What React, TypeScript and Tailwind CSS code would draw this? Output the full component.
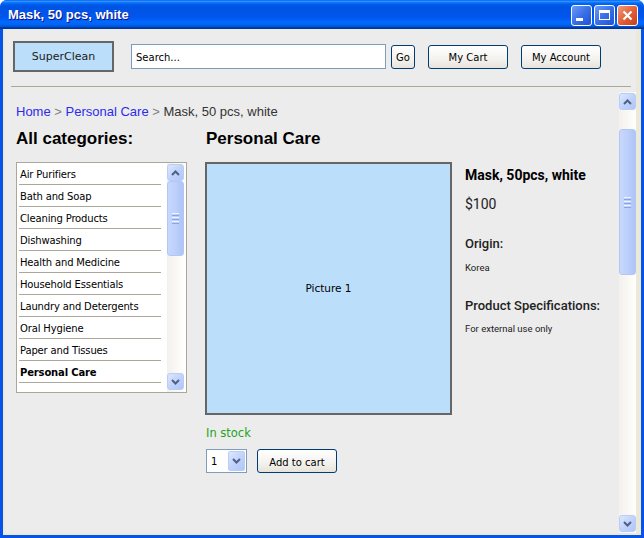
import React from "react";

const tah = "font-['DejaVu_Sans',sans-serif]";
const arial = "font-['Liberation_Sans',Arial,sans-serif]";
const roboto = "font-['Roboto',sans-serif]";

function Chevron({ dir }: { dir: "up" | "down" }) {
  return (
    <svg width="9" height="6" viewBox="0 0 9 6">
      <path
        d={dir === "up" ? "M1 5 L4.5 1.5 L8 5" : "M1 1 L4.5 4.5 L8 1"}
        stroke="#4d6185"
        strokeWidth="2"
        fill="none"
      />
    </svg>
  );
}

function SBtn({ dir }: { dir: "up" | "down" }) {
  return (
    <div className="w-[17px] h-[17px] shrink-0 rounded-[3px] border border-[#b9cdf8] bg-[linear-gradient(135deg,#dde8fe,#c1d3fb_50%,#b0c6f7)] flex items-center justify-center">
      <Chevron dir={dir} />
    </div>
  );
}

function Thumb({ h }: { h: number }) {
  return (
    <div
      className="w-[17px] shrink-0 rounded-[3px] border border-[#b2c7f6] bg-[linear-gradient(90deg,#c9d8fc,#bcd0fb_50%,#aec4f6)] flex flex-col items-center justify-center gap-[1px]"
      style={{ height: h }}
    >
      <div className="w-[7px] h-px bg-[#eef3ff]" />
      <div className="w-[7px] h-px bg-[#8ca5e0]" />
      <div className="w-[7px] h-px bg-[#eef3ff]" />
      <div className="w-[7px] h-px bg-[#8ca5e0]" />
      <div className="w-[7px] h-px bg-[#eef3ff]" />
      <div className="w-[7px] h-px bg-[#8ca5e0]" />
    </div>
  );
}

const xpBtn =
  "h-[24px] pt-[2px] border border-[#003c74] rounded-[3px] bg-[linear-gradient(180deg,#ffffff,#f3f2ee_60%,#e6e3da)] flex items-center justify-center text-[10px] text-black " +
  tah;

const cats = [
  "Air Purifiers",
  "Bath and Soap",
  "Cleaning Products",
  "Dishwashing",
  "Health and Medicine",
  "Household Essentials",
  "Laundry and Detergents",
  "Oral Hygiene",
  "Paper and Tissues",
  "Personal Care",
];

export default function App() {
  return (
    <div className="w-[644px] h-[538px] bg-white">
      <div className="w-full h-full flex flex-col rounded-t-[7px] overflow-hidden bg-[#0553e9]">
        {/* Title bar */}
        <div className="h-[29px] shrink-0 flex items-center pl-[8px] pr-[6px] bg-[linear-gradient(180deg,#0058ee_0%,#3593ff_4%,#288eff_6%,#127dff_8%,#036ffc_10%,#0262ee_14%,#0057e5_20%,#0054e3_24%,#0055eb_56%,#005bf5_66%,#026afe_76%,#0062ef_86%,#0052d6_92%,#0040ab_94%,#003092_100%)]">
          <span
            className={
              "text-white font-bold text-[13px] leading-none [text-shadow:1px_1px_#0f1089] " +
              arial
            }
          >
            Mask, 50 pcs, white
          </span>
          <div className="ml-auto flex gap-[2px] mt-[1px]">
            <div className="w-[21px] h-[21px] rounded-[3px] border border-white bg-[linear-gradient(135deg,#6b9cf7,#3a6fe8_50%,#1f52d6)] flex items-end pl-[4px] pb-[4px]">
              <div className="w-[7px] h-[3px] bg-white" />
            </div>
            <div className="w-[21px] h-[21px] rounded-[3px] border border-white bg-[linear-gradient(135deg,#6b9cf7,#3a6fe8_50%,#1f52d6)] flex items-center justify-center">
              <div className="w-[11px] h-[10px] border border-white border-t-[3px]" />
            </div>
            <div className="w-[21px] h-[21px] rounded-[3px] border border-white bg-[linear-gradient(135deg,#f19a7c,#e2603a_50%,#c8401b)] flex items-center justify-center">
              <svg width="11" height="11" viewBox="0 0 11 11">
                <path d="M1.5 1.5 L9.5 9.5 M9.5 1.5 L1.5 9.5" stroke="white" strokeWidth="2.2" />
              </svg>
            </div>
          </div>
        </div>

        {/* Frame */}
        <div className="flex-1 min-h-0 flex pl-[3px] pr-[3px] pb-[3px]">
          <div className="flex-1 flex bg-[#ece9d8] pl-[2px] pr-[5px] pb-[2px]">
            <div className="flex-1 flex flex-col bg-[#ececec]">
              {/* Header */}
              <div className="flex items-center pl-[8px] pt-[12px]">
                <div
                  className={
                    "w-[101px] h-[31px] pt-[2px] border-2 border-[#666666] bg-[#bbdefb] flex items-center justify-center text-[11px] text-[#222] " +
                    tah
                  }
                >
                  SuperClean
                </div>
                <div
                  className={
                    "ml-[17px] w-[255px] h-[25px] pt-[2px] border border-[#7f9db9] bg-white flex items-center pl-[4px] text-[10px] text-black " +
                    tah
                  }
                >
                  Search...
                </div>
                <div className={"ml-[5px] w-[24px] " + xpBtn}>Go</div>
                <div className={"ml-[13px] w-[80px] " + xpBtn}>My Cart</div>
                <div className={"ml-[13px] w-[80px] " + xpBtn}>My Account</div>
              </div>
              <div className="mt-[14px] ml-[6px] mr-[5px] h-px bg-[#aca899]" />

              {/* Scroll region */}
              <div className="mt-[5px] flex-1 min-h-0 flex">
                <div className="flex-1 pl-[11px] pt-[12px]">
                  <div className={"text-[13px] leading-[16px] " + arial}>
                    <span className="text-[#2b2bef]">Home</span>
                    <span className="text-[#808080]"> &gt; </span>
                    <span className="text-[#2b2bef]">Personal Care</span>
                    <span className="text-[#808080]"> &gt; </span>
                    <span className="text-[#333]">Mask, 50 pcs, white</span>
                  </div>

                  <div className="flex mt-[9px]">
                    {/* Left column */}
                    <div className="w-[171px] shrink-0">
                      <div className={"text-[17px] font-bold leading-[20px] text-black " + arial}>
                        All categories:
                      </div>
                      <div className="mt-[13px] h-[231px] border border-[#aca899] bg-white flex">
                        <div className="flex-1 ml-[2px] mr-[6px]">
                          {cats.map((c) => (
                            <div
                              key={c}
                              className={
                                "h-[22px] pt-[1px] border-b border-[#aca899] flex items-center pl-[1px] text-[10px] tracking-[-0.15px] text-black " +
                                tah +
                                (c === "Personal Care" ? " font-bold" : "")
                              }
                            >
                              {c}
                            </div>
                          ))}
                        </div>
                        <div className="w-[17px] mr-[2px] pt-[1px] pb-[2px] flex flex-col bg-[linear-gradient(90deg,#f3f1ec,#fefefb)]">
                          <SBtn dir="up" />
                          <Thumb h={75} />
                          <div className="flex-1" />
                          <SBtn dir="down" />
                        </div>
                      </div>
                    </div>

                    {/* Right area */}
                    <div className="ml-[18px] flex-1">
                      <div className={"pl-[1px] text-[17px] font-bold leading-[20px] text-black " + arial}>
                        Personal Care
                      </div>
                      <div className="flex mt-[13px]">
                        <div className="w-[247px] shrink-0">
                          <div
                            className={
                              "h-[253px] border-2 border-[#666666] bg-[#bbdefb] flex items-center justify-center text-[10.5px] text-black " +
                              tah
                            }
                          >
                            Picture 1
                          </div>
                          <div
                            className={
                              "mt-[11px] pl-[1px] text-[11.5px] leading-[14px] text-[#22a322] " + tah
                            }
                          >
                            In stock
                          </div>
                          <div className="mt-[9px] flex pl-[1px]">
                            <div className="w-[41px] h-[24px] border border-[#7f9db9] bg-white flex items-center p-[1px]">
                              <span className={"flex-1 pl-[3px] pt-[1px] text-[10px] text-black " + tah}>1</span>
                              <div className="w-[17px] h-full rounded-[2px] border border-[#b9cdf8] bg-[linear-gradient(135deg,#dde8fe,#c1d3fb_50%,#b0c6f7)] flex items-center justify-center">
                                <Chevron dir="down" />
                              </div>
                            </div>
                            <div className={"ml-[10px] w-[80px] " + xpBtn}>Add to cart</div>
                          </div>
                        </div>
                        <div className={"ml-[13px] pt-[4px] text-[#222] " + roboto}>
                          <div className="text-[14px] font-bold leading-[18px] text-black">
                            Mask, 50pcs, white
                          </div>
                          <div className="mt-[11px] text-[14px] leading-[18px]">$100</div>
                          <div className="mt-[23px] text-[13px] font-medium leading-[16px]">Origin:</div>
                          <div className="mt-[10px] text-[9.5px] leading-[12px]">Korea</div>
                          <div className="mt-[24px] text-[13px] font-medium leading-[16px] whitespace-nowrap">
                            Product Specifications:
                          </div>
                          <div className="mt-[9px] text-[9.5px] leading-[12px] whitespace-nowrap">
                            For external use only
                          </div>
                        </div>
                      </div>
                    </div>
                  </div>
                </div>

                {/* Window scrollbar */}
                <div className="w-[17px] shrink-0 flex flex-col pt-[1px] bg-[linear-gradient(90deg,#f3f1ec,#fefefb)]">
                  <SBtn dir="up" />
                  <div className="h-[19px]" />
                  <Thumb h={146} />
                  <div className="flex-1" />
                  <SBtn dir="down" />
                  <div className="h-[1px]" />
                </div>
              </div>
            </div>
          </div>
        </div>
      </div>
    </div>
  );
}
